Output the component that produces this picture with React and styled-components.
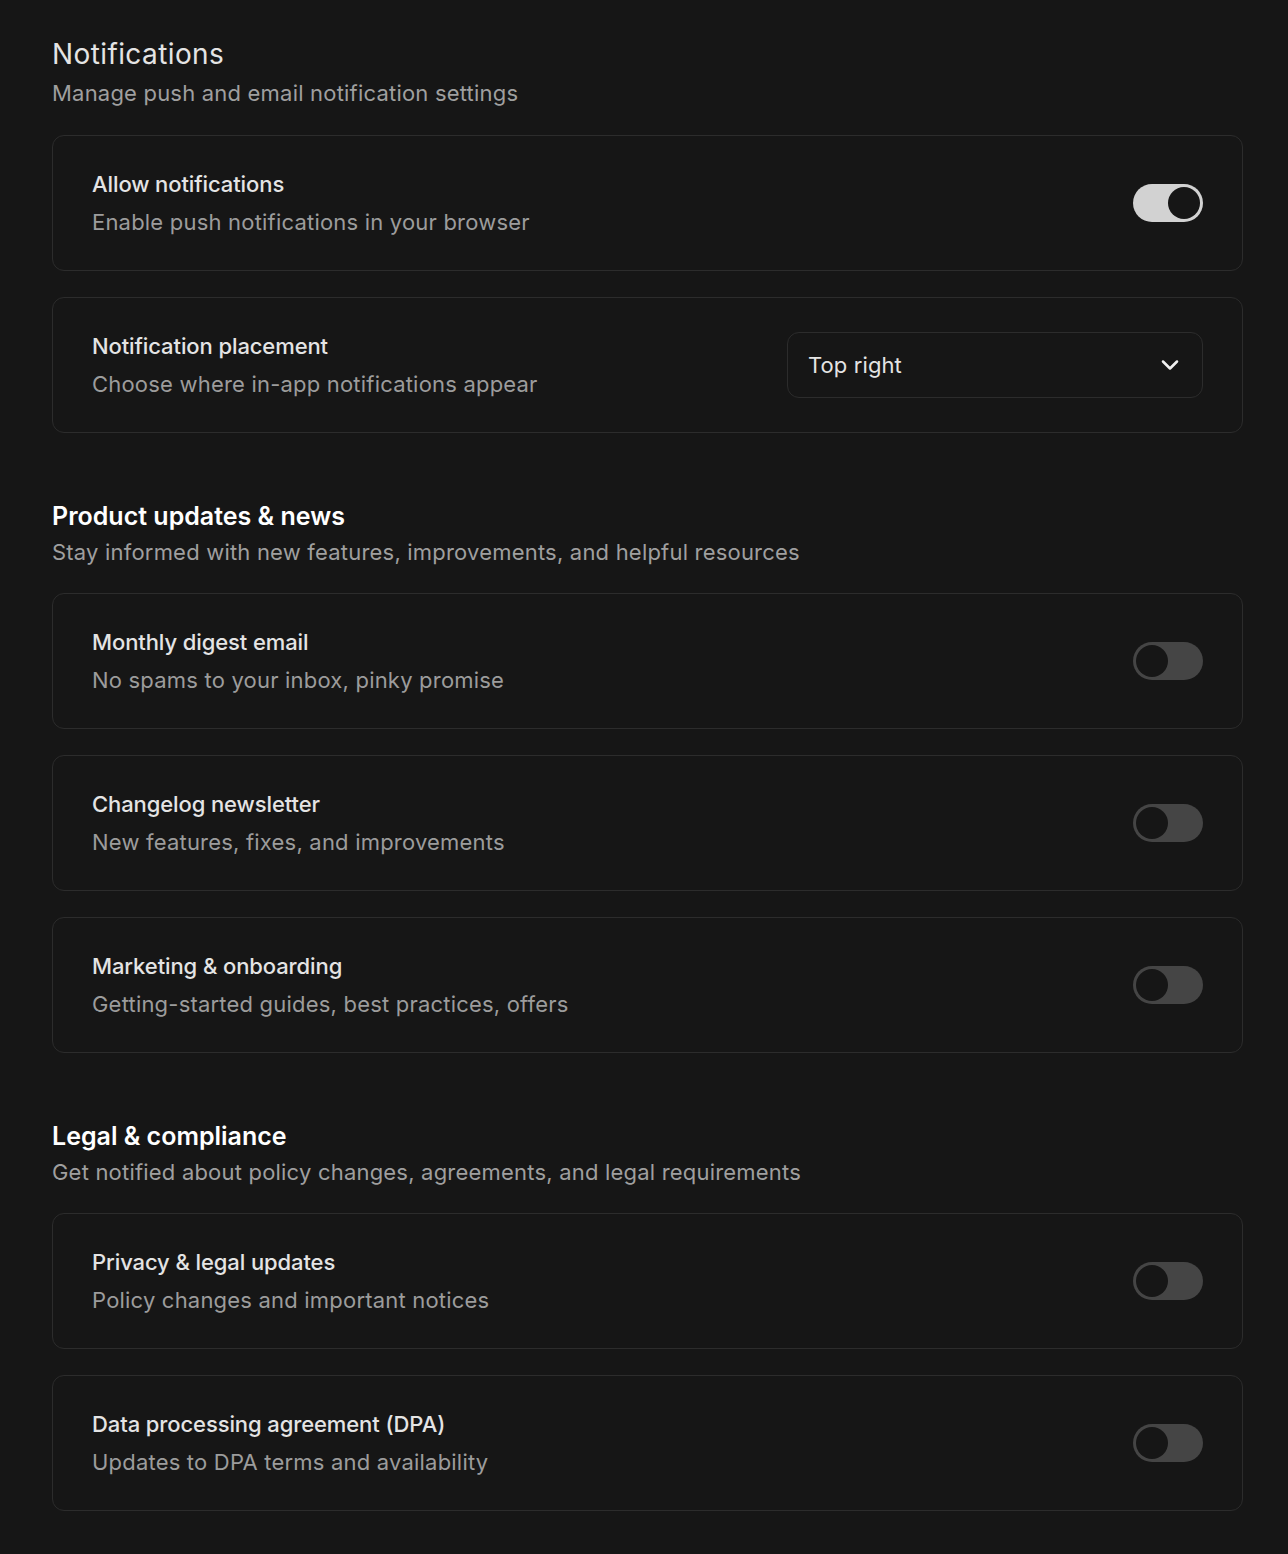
import React, { useState } from 'react';
import styled, { createGlobalStyle } from 'styled-components';

const GlobalStyle = createGlobalStyle`
  html, body {
    margin: 0;
    padding: 0;
    background: #161616;
  }
  body {
    font-family: Inter, "Noto Sans", sans-serif;
    -webkit-font-smoothing: antialiased;
  }
`;

const Page = styled.div`
  box-sizing: border-box;
  width: 1288px;
  min-height: 1554px;
  padding: 36px 45px 42px 52px;
  background: #161616;
`;

const Section = styled.section`
  & + & {
    margin-top: 67px;
  }
`;

const SectionHeader = styled.div`
  margin-bottom: ${p => (p.$main ? '27px' : '26px')};
`;

const SectionTitle = styled.h2`
  margin: 0;
  font-size: ${p => (p.$main ? '28px' : '25px')};
  line-height: ${p => (p.$main ? '36px' : '32px')};
  font-weight: ${p => (p.$main ? 400 : 600)};
  color: ${p => (p.$main ? '#e4e4e4' : '#ffffff')};
  letter-spacing: ${p => (p.$main ? '0.4px' : '0')};
`;

const SectionSubtitle = styled.p`
  margin: ${p => (p.$main ? '6px' : '5px')} 0 0;
  font-size: 22px;
  line-height: 30px;
  color: #9f9f9f;
  letter-spacing: 0.2px;
`;

const CardList = styled.div`
  display: flex;
  flex-direction: column;
  gap: 26px;
`;

const Card = styled.div`
  box-sizing: border-box;
  height: 136px;
  padding: 0 39px;
  display: flex;
  align-items: center;
  justify-content: space-between;
  border: 1px solid #2c2c2c;
  border-radius: 12px;
  background: #161616;
`;

const Text = styled.div`
  display: flex;
  flex-direction: column;
  gap: 8px;
`;

const Label = styled.div`
  font-size: 22px;
  line-height: 30px;
  font-weight: 500;
  color: #e4e4e4;
  letter-spacing: -0.1px;
`;

const Hint = styled.div`
  font-size: 22px;
  line-height: 30px;
  color: #9c9c9c;
  letter-spacing: 0.2px;
`;

const Track = styled.button`
  box-sizing: border-box;
  width: 70px;
  height: 38px;
  padding: 3px;
  border: none;
  border-radius: 19px;
  background: ${p => (p.$on ? '#d2d2d2' : '#454545')};
  display: flex;
  justify-content: ${p => (p.$on ? 'flex-end' : 'flex-start')};
  cursor: pointer;
  flex-shrink: 0;
`;

const Knob = styled.span`
  width: 32px;
  height: 32px;
  border-radius: 50%;
  background: #161616;
`;

const Select = styled.button`
  box-sizing: border-box;
  width: 416px;
  height: 66px;
  padding: 0 18px 0 20px;
  display: flex;
  align-items: center;
  justify-content: space-between;
  border: 1px solid #2c2c2c;
  border-radius: 12px;
  background: #161616;
  color: #e4e4e4;
  font-family: Inter, "Noto Sans", sans-serif;
  font-size: 22px;
  letter-spacing: 0.1px;
  cursor: pointer;
`;

const Chevron = () => (
  <svg width="28" height="28" viewBox="0 0 24 24" fill="none" stroke="#f0f0f0" strokeWidth="2.2" strokeLinecap="round" strokeLinejoin="round">
    <path d="M6 9l6 6 6-6" />
  </svg>
);

const Toggle = ({ initial }) => {
  const [on, setOn] = useState(initial);
  return (
    <Track $on={on} onClick={() => setOn(!on)} aria-pressed={on}>
      <Knob />
    </Track>
  );
};

const SettingRow = ({ label, hint, children }) => (
  <Card>
    <Text>
      <Label>{label}</Label>
      <Hint>{hint}</Hint>
    </Text>
    {children}
  </Card>
);

const sections = [
  {
    title: 'Product updates & news',
    subtitle: 'Stay informed with new features, improvements, and helpful resources',
    rows: [
      { label: 'Monthly digest email', hint: 'No spams to your inbox, pinky promise' },
      { label: 'Changelog newsletter', hint: 'New features, fixes, and improvements' },
      { label: 'Marketing & onboarding', hint: 'Getting-started guides, best practices, offers' },
    ],
  },
  {
    title: 'Legal & compliance',
    subtitle: 'Get notified about policy changes, agreements, and legal requirements',
    rows: [
      { label: 'Privacy & legal updates', hint: 'Policy changes and important notices' },
      { label: 'Data processing agreement (DPA)', hint: 'Updates to DPA terms and availability' },
    ],
  },
];

export default function App() {
  return (
    <>
      <GlobalStyle />
      <Page>
        <Section>
          <SectionHeader $main>
            <SectionTitle $main>Notifications</SectionTitle>
            <SectionSubtitle $main>Manage push and email notification settings</SectionSubtitle>
          </SectionHeader>
          <CardList>
            <SettingRow label="Allow notifications" hint="Enable push notifications in your browser">
              <Toggle initial />
            </SettingRow>
            <SettingRow label="Notification placement" hint="Choose where in-app notifications appear">
              <Select>
                <span>Top right</span>
                <Chevron />
              </Select>
            </SettingRow>
          </CardList>
        </Section>

        {sections.map(s => (
          <Section key={s.title}>
            <SectionHeader>
              <SectionTitle>{s.title}</SectionTitle>
              <SectionSubtitle>{s.subtitle}</SectionSubtitle>
            </SectionHeader>
            <CardList>
              {s.rows.map(r => (
                <SettingRow key={r.label} label={r.label} hint={r.hint}>
                  <Toggle initial={false} />
                </SettingRow>
              ))}
            </CardList>
          </Section>
        ))}
      </Page>
    </>
  );
}
